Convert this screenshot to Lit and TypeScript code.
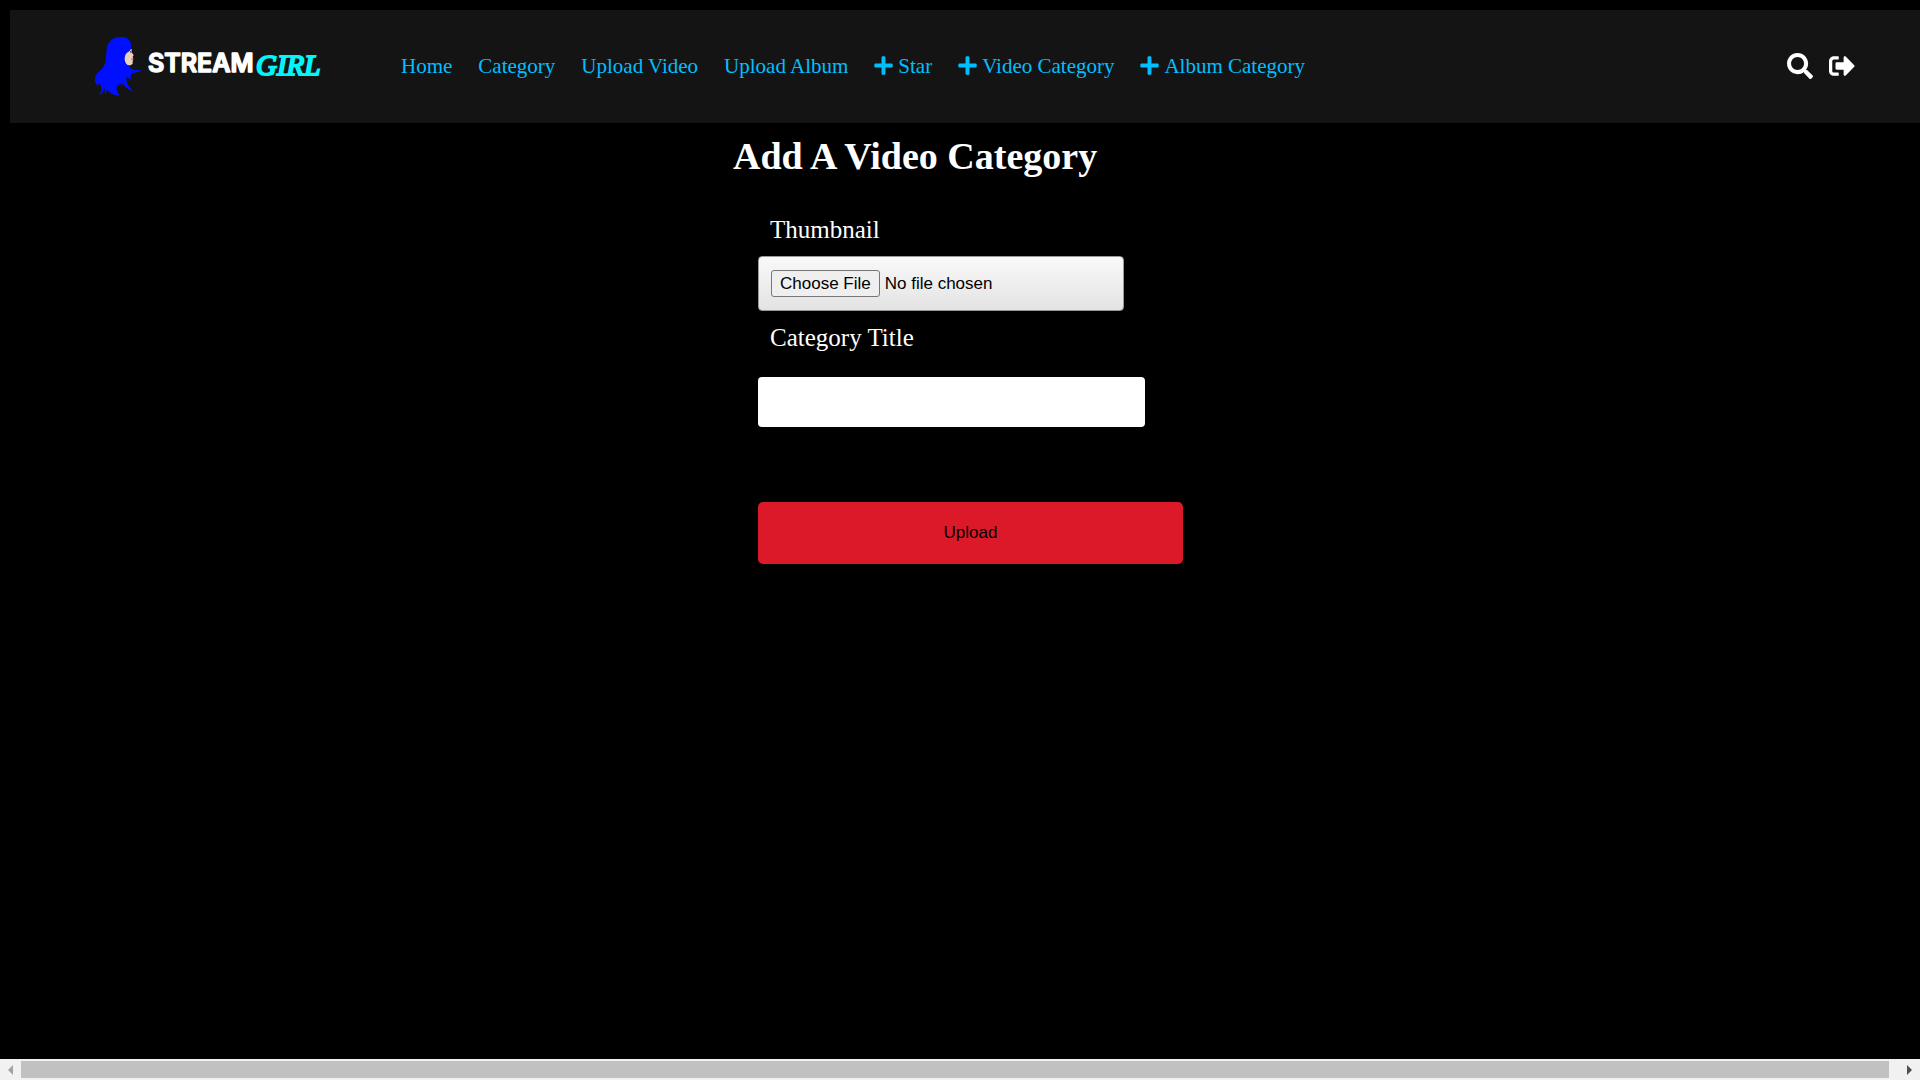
import { LitElement, html, css, svg } from "lit";
import { customElement } from "lit/decorators.js";

const PLUS =
  "M416 208H272V64c0-17.67-14.33-32-32-32h-32c-17.67 0-32 14.33-32 32v144H32c-17.67 0-32 14.33-32 32v32c0 17.67 14.33 32 32 32h144v144c0 17.67 14.33 32 32 32h32c17.67 0 32-14.33 32-32V304h144c17.67 0 32-14.33 32-32v-32c0-17.67-14.33-32-32-32z";
const SEARCH =
  "M505 442.7L405.3 343c-4.5-4.5-10.6-7-17-7H372c27.6-35.3 44-79.7 44-128C416 93.1 322.9 0 208 0S0 93.1 0 208s93.1 208 208 208c48.3 0 92.7-16.4 128-44v16.3c0 6.4 2.5 12.5 7 17l99.7 99.7c9.4 9.4 24.6 9.4 33.9 0l28.3-28.3c9.4-9.4 9.4-24.6.1-34zM208 336c-70.7 0-128-57.2-128-128 0-70.7 57.2-128 128-128 70.7 0 128 57.2 128 128 0 70.7-57.2 128-128 128z";
const SIGN_OUT =
  "M497 273L329 441c-15 15-41 4.5-41-17v-96H152c-13.3 0-24-10.7-24-24v-96c0-13.3 10.7-24 24-24h136V88c0-21.4 25.9-32 41-17l168 168c9.3 9.4 9.3 24.6 0 34zM192 436v-40c0-6.6-5.4-12-12-12H96c-17.7 0-32-14.3-32-32V160c0-17.7 14.3-32 32-32h84c6.600 0 12-5.4 12-12V76c0-6.600-5.4-12-12-12H96c-53 0-96 43-96 96v192c0 53 43 96 96 96h84c6.600 0 12-5.4 12-12z";

const NAV: { label: string; add?: boolean }[] = [
  { label: "Home" },
  { label: "Category" },
  { label: "Upload Video" },
  { label: "Upload Album" },
  { label: "Star", add: true },
  { label: "Video Category", add: true },
  { label: "Album Category", add: true },
];

@customElement("site-logo")
export class SiteLogo extends LitElement {
  static styles = css`
    :host { display: block; flex: none; }
    .logo { display: block; width: 228px; height: 60px; overflow: visible; }
    .stream {
      font: 600 25px Inter, "Open Sans", sans-serif;
      fill: #fff;
      stroke: #fff;
      stroke-width: 1.5px;
      stroke-linejoin: round;
    }
    .girl {
      font: italic 400 29px "Liberation Serif", serif;
      fill: #00f6fb;
      stroke: #00f6fb;
      stroke-width: 2px;
    }
  `;
  render() {
    return html`<svg class="logo" viewBox="0 0 228 60" role="img" aria-label="StreamGirl">
      ${svg`<g transform="scale(.33333) translate(-42 -48)">
        <path fill="#ead0bf" d="M150 84L155 88L155 97L161 106L158 110L160 117L158 124L158 131L152 136L140 136L130 125L132 104Z"/>
        <path fill="#d8202c" d="M154 115L160 117L155 120Z"/>
        <path fill="#151515" d="M150 94L155 95L154 98L150 97Z"/>
        <path fill="#0010ff" d="M122 51C142 49 154 62 154 80C154 90 148 95 141 98C136 102 134 109 134 117C134 127 139 134 147 137C149 145 160 153 184 149C180 157 166 156 158 160C152 163 150 170 155 180C147 177 142 172 141 168C137 177 139 186 144 194C148 202 154 208 161 214C146 211 136 202 129 193C121 192 113 194 110 201C108 210 113 220 120 226C103 228 88 219 80 206C81 216 76 220 76 225C74 221 75 210 72 202C72 215 67 224 57 223C67 215 66 204 61 194C56 189 53 191 55 199C46 191 42 182 46 171C49 157 64 153 71 139C81 120 77 96 82 78C87 61 102 51 122 51Z"/>
      </g>`}
      <text class="stream" x="54" y="36">STREAM</text>
      <text class="girl" x="162" y="39">GIRL</text>
    </svg>`;
  }
}

@customElement("app-root")
export class AppRoot extends LitElement {
  static styles = css`
    :host {
      display: flex;
      flex-direction: column;
      min-height: 100vh;
      background: #000;
      color: #fff;
      font-family: "Liberation Serif", "Times New Roman", serif;
    }
    .page { flex: 1; padding: 10px 0 0 10px; }
    .bar {
      display: flex;
      align-items: center;
      min-height: 113px;
      box-sizing: border-box;
      padding: 0 65px 2px 84px;
      background: #141414;
    }
    .home { display: block; }
    .nav { display: flex; flex: 1; gap: 26px; margin-left: 79px; }
    .link {
      display: flex;
      align-items: center;
      gap: 5px;
      color: #00bfff;
      font-size: 21px;
      line-height: 24px;
      text-decoration: none;
      white-space: nowrap;
    }
    .plus { width: 19px; height: 21px; fill: currentColor; }
    .tools { display: flex; gap: 16px; }
    .tool { padding: 0; border: 0; background: none; color: #fff; cursor: pointer; }
    .glyph { display: block; width: 26px; height: 26px; fill: currentColor; }
    .panel { width: min(454px, 100%); margin: 0 auto; padding-right: 10px; }
    .title { margin: 10px 0 36px; font-size: 38px; line-height: 46px; }
    .form { display: flex; flex-direction: column; align-items: flex-start; padding: 0 4px 0 25px; }
    .label { padding-left: 12px; font-size: 25px; line-height: 29px; }
    .file, .text, .submit {
      box-sizing: border-box;
      font: 17px "Liberation Sans", Arial, sans-serif;
    }
    .file {
      width: 86%;
      height: 55px;
      margin: 12px 0;
      padding: 13px 12px;
      border: 1px solid #999;
      border-radius: 4px;
      background: linear-gradient(#f9f9f9, #e3e3e3);
      color: #000;
    }
    .file::file-selector-button {
      height: 27px;
      margin-right: 5px;
      padding: 0 8px;
      border: 1px solid #767676;
      border-radius: 3px;
      background: #efefef;
      color: #000;
      font: inherit;
    }
    .text {
      width: 91%;
      height: 50px;
      margin: 25px 0 75px;
      padding: 12px;
      border: 0;
      border-radius: 4px;
      background: #fff;
    }
    .submit {
      width: 100%;
      height: 62px;
      padding: 0;
      border: 0;
      border-radius: 5px;
      background: #dc1928;
      color: #000;
      cursor: pointer;
    }
    .scroll { display: flex; height: 21px; background: #f1f1f1; }
    .step {
      display: flex;
      align-items: center;
      justify-content: center;
      width: 21px;
      padding: 0;
      border: 0;
      background: none;
      color: #505050;
    }
    .step.off { color: #a3a3a3; }
    .arrow { width: 5px; height: 10px; fill: currentColor; }
    .track { flex: 1; padding: 2px 10px 2px 0; }
    .thumb { height: 100%; background: #c1c1c1; }
  `;

  private icon(cls: string, box: string, d: string) {
    return html`<svg class=${cls} viewBox=${box} aria-hidden="true"><path d=${d}></path></svg>`;
  }

  render() {
    return html`
      <div class="page">
        <header class="bar">
          <a class="home" href="#"><site-logo></site-logo></a>
          <nav class="nav">
            ${NAV.map(
              (n) => html`<a class="link" href="#">${n.add ? this.icon("plus", "0 0 448 512", PLUS) : null}<span>${n.label}</span></a>`
            )}
          </nav>
          <div class="tools">
            <button class="tool" aria-label="Search">${this.icon("glyph", "0 0 512 512", SEARCH)}</button>
            <button class="tool" aria-label="Sign out">${this.icon("glyph", "0 0 512 512", SIGN_OUT)}</button>
          </div>
        </header>
        <main class="panel">
          <h1 class="title">Add A Video Category</h1>
          <form class="form" @submit=${(e: Event) => e.preventDefault()}>
            <label class="label" for="thumb">Thumbnail</label>
            <input class="file" id="thumb" type="file" />
            <label class="label" for="title">Category Title</label>
            <input class="text" id="title" type="text" />
            <button class="submit" type="submit">Upload</button>
          </form>
        </main>
      </div>
      <div class="scroll">
        <button class="step off" aria-label="Scroll left" disabled>${this.icon("arrow", "0 0 5 10", "M5 0V10L0 5Z")}</button>
        <div class="track"><div class="thumb"></div></div>
        <button class="step" aria-label="Scroll right">${this.icon("arrow", "0 0 5 10", "M0 0V10L5 5Z")}</button>
      </div>
    `;
  }
}
